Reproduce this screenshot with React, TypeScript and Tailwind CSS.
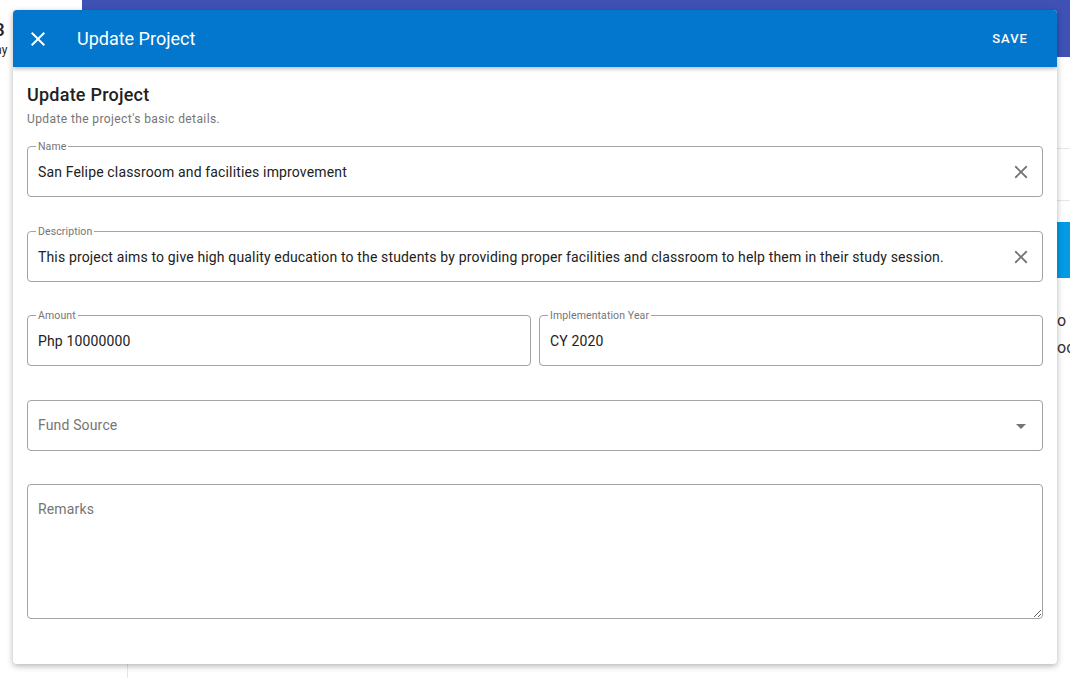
import type { ReactNode } from "react";

const CloseIcon = ({ size, className }: { size: number; className?: string }) => (
	<svg width={size} height={size} viewBox="0 0 24 24" className={className} fill="currentColor">
		<path d="M19 6.41L17.59 5 12 10.59 6.41 5 5 6.41 10.59 12 5 17.59 6.41 19 12 13.41 17.59 19 19 17.59 13.41 12z" />
	</svg>
);

const ArrowDropDown = () => (
	<svg width={24} height={24} viewBox="0 0 24 24" className="text-[#757575]" fill="currentColor">
		<path d="M7 10l5 5 5-5z" />
	</svg>
);

function OutlinedField({
	label,
	value,
	clearable,
	className,
}: {
	label: string;
	value: string;
	clearable?: boolean;
	className?: string;
}) {
	return (
		<fieldset className={`min-w-0 rounded-[4px] border border-[#a3a3a3] pl-[8px] pr-[10px] ${className ?? ""}`}>
			<legend className="px-[2px] text-[10.5px] leading-[12px] tracking-[0.11px] text-[#757575]">
				<span className="relative top-[1px]">{label}</span>
			</legend>
			<div className="flex h-[44px] items-start">
				<div className="flex h-[39px] w-full items-center justify-between pl-[2px]">
					<span className="truncate text-[14px] leading-[20px] tracking-[0.15px] text-[#212121]">{value}</span>
					{clearable && <CloseIcon size={22} className="shrink-0 text-[#757575]" />}
				</div>
			</div>
		</fieldset>
	);
}

function Background({ children }: { children?: ReactNode }) {
	return (
		<div className="flex h-full w-full flex-col">
			{/* top bar */}
			<div className="flex h-[57px] shrink-0">
				<div className="w-[82px] overflow-hidden bg-white pt-[18px] text-[#212121]">
					<div className="-ml-[6px] text-[19px] font-medium leading-[24px]">3</div>
					<div className="-ml-[5px] text-[12px] leading-[16px]">ny</div>
				</div>
				<div className="flex-1 bg-[#3f51b5]" />
			</div>
			<div className="flex flex-1">
				<div className="w-[128px] shrink-0 border-r border-[#e6e6e6]" />
				<div className="flex min-w-0 flex-1 flex-col overflow-hidden">
					<div className="h-[91px]" />
					<div className="h-[52px] border-t border-[#e6e6e6]" />
					<div className="border-t border-[#e6e6e6]" />
					<div className="mt-[21px] h-[56px] bg-[#039be5]" />
					<div className="mt-[29px] whitespace-nowrap pl-[929px] text-[16px] leading-[27px] text-[#333]">
						<div>o t</div>
						<div>oc</div>
					</div>
				</div>
			</div>
			{children}
		</div>
	);
}

export default function App() {
	return (
		<div className="relative h-[678px] w-[1070px] overflow-hidden bg-white font-['Roboto',sans-serif]">
			<Background />

			{/* Dialog */}
			<div className="absolute left-[13px] top-[10px] flex h-[654px] w-[1044px] flex-col overflow-hidden rounded-[4px] bg-white shadow-[0_2px_6px_rgba(0,0,0,0.3)]">
				<div className="relative z-10 flex h-[57px] shrink-0 items-center bg-[#0277cd] pl-[13px] pr-[29px] text-white shadow-[0_2px_4px_rgba(0,0,0,0.25)]">
					<CloseIcon size={24} />
					<span className="ml-[27px] text-[18px] leading-[24px]">Update Project</span>
					<span className="ml-auto text-[13px] font-medium tracking-[0.08em]">SAVE</span>
				</div>

				<div className="flex flex-col px-[14px]">
					<h2 className="mt-[16px] text-[18px] font-medium leading-[24px] tracking-[0.0125em] text-[#212121]">
						Update Project
					</h2>
					<p className="mt-[4px] text-[12px] leading-[16px] tracking-[0.4px] text-[#757575]">
						Update the project's basic details.
					</p>

					<OutlinedField
						className="mt-[13px]"
						label="Name"
						value="San Felipe classroom and facilities improvement"
						clearable
					/>
					<OutlinedField
						className="mt-[28px]"
						label="Description"
						value="This project aims to give high quality education to the students by providing proper facilities and classroom to help them in their study session."
						clearable
					/>

					<div className="mt-[27px] grid grid-cols-2 gap-[8px]">
						<OutlinedField label="Amount" value="Php 10000000" />
						<OutlinedField label="Implementation Year" value="CY 2020" />
					</div>

					<div className="mt-[34px] flex h-[51px] items-center justify-between rounded-[4px] border border-[#a3a3a3] pl-[10px] pr-[9px]">
						<span className="-mt-[1px] text-[14px] leading-[20px] tracking-[0.15px] text-[#757575]">Fund Source</span>
						<ArrowDropDown />
					</div>

					<textarea
						className="mt-[33px] h-[135px] w-full rounded-[4px] border border-[#a3a3a3] px-[10px] pt-[14px] text-[14px] leading-[20px] tracking-[0.15px] text-[#212121] outline-none placeholder:text-[#757575]"
						placeholder="Remarks"
					/>
				</div>
			</div>
		</div>
	);
}
